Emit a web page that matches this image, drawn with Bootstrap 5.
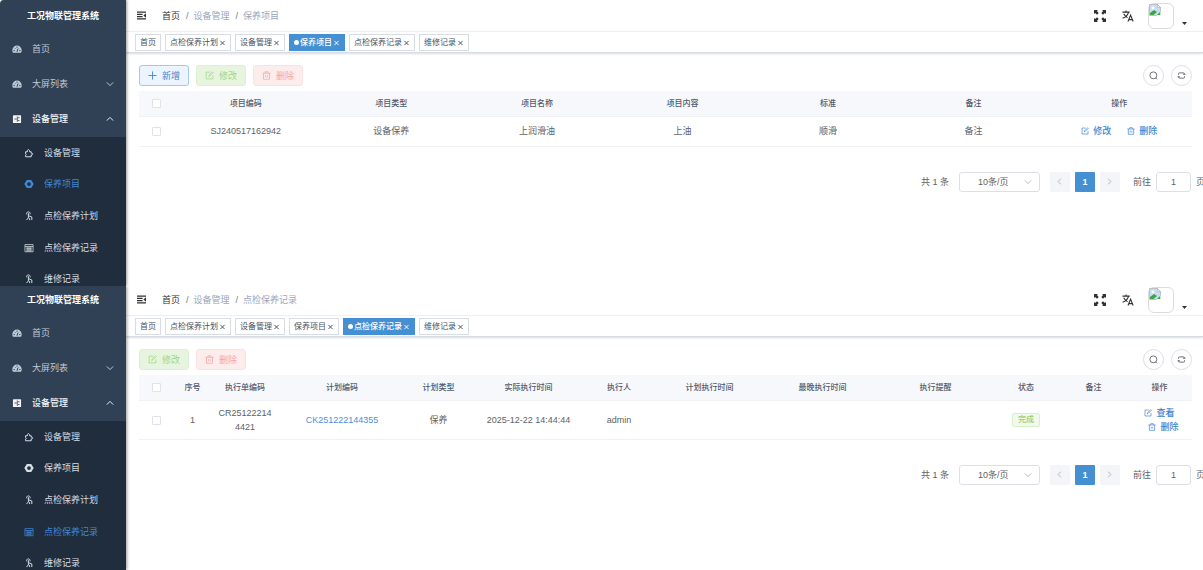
<!DOCTYPE html>
<html lang="zh-CN">
<head>
<meta charset="utf-8">
<meta name="viewport" content="width=device-width, initial-scale=1">
<title>工况物联管理系统</title>
<link href="https://cdn.jsdelivr.net/npm/bootstrap@5.3.0/dist/css/bootstrap.min.css" rel="stylesheet">
<style>
:root{--side:#304156;--sub:#1f2d3d;--blue:#4490d3}
body{font-family:"Liberation Sans","Noto Sans CJK SC",sans-serif;font-size:9px;line-height:14px;color:#606266;background:#fff}
button,input,select{font:inherit}
svg{display:block;flex:none}
.ico{width:9px;height:9px;fill:none;stroke:currentColor;stroke-width:1.2}
.ico-bar{width:12px;height:12px}
.pages{display:grid;grid-template-rows:286fr 284fr;height:100vh;min-height:570px}
.screen{--head:32px;overflow:hidden;min-height:0}
.screen-short{--head:30px}
/* sidebar */
.side{width:126px;background:var(--side);box-shadow:1px 0 3px rgba(0,0,0,.4);z-index:2;flex:none;overflow:hidden}
.screen:first-child .side{border-top-left-radius:4px}
.side-title{height:var(--head);color:#fff;font-weight:700;font-size:9px;line-height:calc(var(--head) - 2px);padding-top:1px}
.screen-short .side-title{padding-top:0}
.side a{color:#bfcbd9;text-decoration:none;display:flex;align-items:center}
.side-top{height:35px;padding:0 12px 1px;gap:10px}
.side-top .ico{width:10px;height:10px}
.side-top .fold{width:8px;height:8px;margin-left:auto}
.side a.opened{color:#f4f4f5;font-weight:500}
.side-sub{display:grid;grid-auto-rows:1fr;height:158px;background:var(--sub)}
.side-sub a{padding-left:24px;gap:10px;color:#d5dde6}
.side-sub .ico{width:10px;height:10px}
.side-sub a.on{color:#4187d6}
/* header */
.topbar{height:var(--head);border-bottom:1px solid #f0f1f3;padding:0 16px 0 11px}
.screen-short .topbar{padding-bottom:2px}
.breadcrumb{--bs-breadcrumb-item-padding-x:5px;--bs-breadcrumb-divider-color:#70757d;--bs-breadcrumb-font-size:9px;margin:0 0 0 16px}
.breadcrumb-item{color:#97a8be}
.breadcrumb-item + .breadcrumb-item{padding-left:6px}
.breadcrumb a{color:#303133;text-decoration:none}
.plain{border:0;background:none;padding:0;color:#303133}
.avatar{width:26px;height:26px;border:1px solid #dcdcdc;border-radius:6px;padding:0;margin-left:14px}
.tagbar{height:21px;padding:2px 0 0 9px;gap:4px;border-bottom:1px solid #d8dce5;box-shadow:0 1px 2px rgba(0,0,0,.14)}
.tag{height:17px;border:1px solid #d8dce5;font-size:8px;line-height:15px;padding:0 4px;color:#495060;text-decoration:none;display:flex;align-items:center;gap:1px;white-space:nowrap}
.tag .ico{width:7px;height:7px;padding-top:1px}
.tag.on{background:var(--blue);border-color:var(--blue);color:#fff;font-weight:500}
.tag.on::before{content:"";width:5px;height:5px;border-radius:50%;background:#fff}
/* content */
.work{padding:12px 11px 0 13px}
.tools{gap:7px}
.tool{width:50px;height:21px;border-radius:3px;padding:0;display:flex;align-items:center;justify-content:center;gap:5px;--bs-btn-font-size:9px;--bs-btn-line-height:14px}
.tool-add{color:#3f86cf;background:#ecf5ff;border-color:#a3c9ef}
.tool-edit,.tool-edit:disabled{color:#a3d488;background:#e7f5df;border-color:#def0d4;opacity:1}
.tool-del,.tool-del:disabled{color:#f5a5a5;background:#fdecec;border-color:#fbe2e2;opacity:1}
.round{width:21px;height:21px;border:1px solid #dcdfe6;border-radius:50%;background:#fff;color:#606266;padding:0;display:grid;place-items:center}
.grid-table{table-layout:fixed;width:100%;margin:5px 0 0;text-align:center}
.grid-table th{background:#f7f8fb;height:25px;font-size:8px;font-weight:500;color:#515a6e;padding:1px 0 0;border-bottom:1px solid #eff1f5}
.grid-table td{height:30px;padding:5px 6px;border-bottom:1px solid #eff1f5;word-break:break-all}
.grid-table th,.grid-table td{vertical-align:middle}
.grid-table .form-check-input{width:9px;height:9px;margin:0;border:1px solid #dfe2e8;border-radius:1px;display:inline-block;vertical-align:middle}
.grid-table .acts{padding-left:0;padding-right:0}
.act{border:0;background:none;color:#3a84d0;padding:0 4px;display:inline-flex;align-items:center;gap:4px;font-weight:500;height:14px;vertical-align:top}
.act + .act{margin-left:8px}
.act .ico{width:8px;height:8px}
.plan-link{color:#4a8fdc}
.done{display:inline-block;font-size:8px;line-height:12px;height:14px;padding:0 5px;color:#7cc35a;background:#f0f9eb;border:1px solid #d9efcc;border-radius:2px;vertical-align:middle}
.pager{margin:25px -13px 0 0}
.pager label{margin-left:13px}
.pager .form-select{width:81px;height:20px;padding:0 20px 0 18px;font-size:9px;line-height:18px;border:1px solid #dcdfe6;border-radius:3px;color:#606266;margin:0 10px;background-image:url("data:image/svg+xml,%3Csvg xmlns='http://www.w3.org/2000/svg' viewBox='0 0 10 10'%3E%3Cpath d='M1 3l4 4 4-4' fill='none' stroke='%23a4a8b0'/%3E%3C/svg%3E");background-size:8px;background-position:right 7px center}
.pages-nav{gap:5px}
.pg{width:20px;height:20px;border:0;border-radius:1px;background:#f4f5f8;color:#a8abb2;padding:0;display:grid;place-items:center}
.pg .ico{width:7px;height:7px}
.pg.on{background:var(--blue);color:#fff;font-weight:700}
.pager .form-control{width:35px;height:20px;padding:0;border:1px solid #dcdfe6;border-radius:3px;font-size:9px;text-align:center;color:#606266;margin:0 5px}
</style>
</head>
<body>
<svg width="0" height="0" class="position-absolute" aria-hidden="true">
<symbol id="dash" viewBox="0 0 16 16"><path d="M1.500 14A7.500 7.500 0 0 1 .5 10a7.500 7.500 0 0 1 15 0 7.500 7.500 0 0 1-1 4z" fill="currentColor" stroke="none"/><path d="M8 12.500l1.500-5M2.500 10.500h2M11.500 10.500h2M4.300 6.300l1 1M8 4v2M11.700 6.300l-.6.6" stroke="#304156" stroke-width="1.600"/></symbol>
<symbol id="device" viewBox="0 0 16 16"><rect x="1.500" y="2" width="13" height="12.500" rx="1" fill="currentColor" stroke="none"/><path d="M4 8h3.500M9.500 6h2.500M9.500 10.500h2.500M8.500 4v8.500" stroke="#304156" stroke-width="1.300"/></symbol>
<symbol id="puzzle" viewBox="0 0 16 16"><path d="M2.500 6h3c-1-4.500 4-4.500 3.500 0h2.500v2.300c3.500-.5 3.500 3.200 0 2.700V14h-9v-2.500c1.500-.5 1.500-2 0-2.500z" stroke-width="1.600"/></symbol>
<symbol id="hexnut" viewBox="0 0 16 16"><path d="M4.500 1.500h7L15.500 8l-4 6.500h-7L.5 8zM8 5a3 3 0 1 0 0 6 3 3 0 0 0 0-6z" fill="currentColor" fill-rule="evenodd" stroke="none"/></symbol>
<symbol id="touch" viewBox="0 0 16 16"><path d="M4.500 5.500a2.800 2.800 0 1 1 5 0M7 3.500v7.500L4 14.500M7 7.500l5.500 2v5M7 10.500l2 1.500v2.500" stroke-width="1.600"/></symbol>
<symbol id="sheet" viewBox="0 0 16 16"><path d="M1.500 2.500h13v11.500h-13zM1.500 5.500h13M5 5.500V14M8 5.500V14M11 5.500V14M4 8.500h8M4 11.300h8" stroke-width="1.200"/></symbol>
<symbol id="down" viewBox="0 0 10 10"><path d="M1 3l4 4 4-4"/></symbol>
<symbol id="up" viewBox="0 0 10 10"><path d="M1 7l4-4 4 4"/></symbol>
<symbol id="left" viewBox="0 0 10 10"><path d="M7 1L3 5l4 4"/></symbol>
<symbol id="right" viewBox="0 0 10 10"><path d="M3 1l4 4-4 4"/></symbol>
<symbol id="cross" viewBox="0 0 10 10"><path d="M1.500 1.500l7 7M8.500 1.500l-7 7" stroke-width="1.600"/></symbol>
<symbol id="plus" viewBox="0 0 10 10"><path d="M5 .5v9M.5 5h9" stroke-width="1"/></symbol>
<symbol id="edit" viewBox="0 0 12 12"><path d="M7 1.500H1.500v9h9V6M5 7.500l.5-2L10 1l1 1-4.500 4.500z" stroke-width="1"/></symbol>
<symbol id="trash" viewBox="0 0 12 12"><path d="M.5 3h11M4 3V1h4v2M2 3v8h8V3M4.800 5.500v3M7.200 5.500v3" stroke-width="1"/></symbol>
<symbol id="search" viewBox="0 0 12 12"><circle cx="5.800" cy="5.800" r="4.600"/><path d="M8.800 9.200l2 2"/></symbol>
<symbol id="refresh" viewBox="0 0 12 12"><path d="M2 5V3.500Q2 2.500 3 2.500h5.500Q10 2.500 10 4.500M8 4.300h3.300M10 7v1.500Q10 9.500 9 9.500H3.500Q2 9.500 2 7.500M4 7.700H.7"/></symbol>
<symbol id="fold" viewBox="0 0 12 12"><path d="M0 1.500h12M0 4.500h7.500M0 7.500h7.500M0 10.500h12" stroke-width="1.500"/><path d="M12 3v6L8.500 6z" fill="currentColor" stroke="none"/></symbol>
<symbol id="full" viewBox="0 0 12 12"><path d="M0 0h4L2.900 1.100 4.700 3 3 4.700 1.100 2.900 0 4zM12 0v4l-1.100-1.100L9 4.700 7.300 3l1.800-1.900L8 0zM0 12V8l1.100 1.100L3 7.300 4.700 9l-1.800 1.900L4 12zM12 12H8l1.100-1.100L7.300 9 9 7.300l1.900 1.800L12 8z" fill="currentColor" stroke="none"/></symbol>
<symbol id="lang" viewBox="0 0 14 14"><path d="M.5 2.500h8.500M4.700.5v2M2 4.500c1 2 2.500 3.500 4.500 4.500M7.500 3C6.500 6 4 8.500.8 9.500M7 13.500L10 6l3 7.500M8 11.200h4" stroke-width="1.300"/></symbol>
<symbol id="broken" viewBox="0 0 12 12"><path d="M.5.5h8l3 3v4l-4 4h-7z" fill="#c9dcf5" stroke="#b5b5b5" stroke-width=".8"/><path d="M8.500.5v3h3z" fill="#fff" stroke="#aaa" stroke-width=".6"/><circle cx="4" cy="4" r="1.400" fill="#fff" stroke="none"/><path d="M1 11V9l4-3 3 2-3.500 3zM8 11l3.300-3V11z" fill="#38a838" stroke="none"/></symbol>
</svg>

<div class="pages">
<section class="screen d-flex">
  <nav class="side" aria-label="主菜单">
    <div class="side-title text-center">工况物联管理系统</div>
    <a class="side-top" href="#"><svg class="ico"><use href="#dash"/></svg>首页</a>
    <a class="side-top" href="#"><svg class="ico"><use href="#dash"/></svg>大屏列表<svg class="ico fold"><use href="#down"/></svg></a>
    <a class="side-top opened" href="#"><svg class="ico"><use href="#device"/></svg>设备管理<svg class="ico fold"><use href="#up"/></svg></a>
    <div class="side-sub">
      <a href="#"><svg class="ico"><use href="#puzzle"/></svg>设备管理</a>
      <a href="#" class="on"><svg class="ico"><use href="#hexnut"/></svg>保养项目</a>
      <a href="#"><svg class="ico"><use href="#touch"/></svg>点检保养计划</a>
      <a href="#"><svg class="ico"><use href="#sheet"/></svg>点检保养记录</a>
      <a href="#"><svg class="ico"><use href="#touch"/></svg>维修记录</a>
    </div>
  </nav>
  <main class="flex-grow-1 overflow-hidden">
    <header class="topbar d-flex align-items-center">
      <button class="plain" aria-label="折叠菜单"><svg class="ico" width="11"><use href="#fold"/></svg></button>
      <ol class="breadcrumb me-auto"><li class="breadcrumb-item"><a href="#">首页</a></li><li class="breadcrumb-item">设备管理</li><li class="breadcrumb-item">保养项目</li></ol>
      <button class="plain" aria-label="全屏"><svg class="ico ico-bar"><use href="#full"/></svg></button>
      <button class="plain ms-3" aria-label="语言"><svg class="ico ico-bar"><use href="#lang"/></svg></button>
      <button class="plain d-flex align-items-end" aria-label="用户"><span class="avatar"><svg width="12" height="12"><use href="#broken"/></svg></span><svg class="ms-2 mb-1" width="5" height="3"><path d="M0 0h5L2.500 3z" fill="#303133"/></svg></button>
    </header>
    <div class="tagbar d-flex">
      <a class="tag" href="#">首页</a>
      <a class="tag" href="#">点检保养计划<svg class="ico"><use href="#cross"/></svg></a>
      <a class="tag" href="#">设备管理<svg class="ico"><use href="#cross"/></svg></a>
      <a class="tag on" href="#">保养项目<svg class="ico"><use href="#cross"/></svg></a>
      <a class="tag" href="#">点检保养记录<svg class="ico"><use href="#cross"/></svg></a>
      <a class="tag" href="#">维修记录<svg class="ico"><use href="#cross"/></svg></a>
    </div>
    <div class="work">
      <div class="d-flex">
        <div class="d-flex me-auto tools">
          <button class="btn tool tool-add"><svg class="ico"><use href="#plus"/></svg>新增</button>
          <button class="btn tool tool-edit" disabled><svg class="ico"><use href="#edit"/></svg>修改</button>
          <button class="btn tool tool-del" disabled><svg class="ico"><use href="#trash"/></svg>删除</button>
        </div>
        <div class="d-flex tools">
          <button class="round" aria-label="搜索"><svg class="ico"><use href="#search"/></svg></button>
          <button class="round" aria-label="刷新"><svg class="ico"><use href="#refresh"/></svg></button>
        </div>
      </div>
      <table class="grid-table">
        <colgroup><col style="width:34px"><col span="7"></colgroup>
        <thead><tr><th><input class="form-check-input" type="checkbox" aria-label="全选"></th><th>项目编码</th><th>项目类型</th><th>项目名称</th><th>项目内容</th><th>标准</th><th>备注</th><th>操作</th></tr></thead>
        <tbody><tr><td><input class="form-check-input" type="checkbox" aria-label="选择"></td><td>SJ240517162942</td><td>设备保养</td><td>上润滑油</td><td>上油</td><td>顺滑</td><td>备注</td><td class="acts"><button class="act"><svg class="ico"><use href="#edit"/></svg>修改</button><button class="act"><svg class="ico"><use href="#trash"/></svg>删除</button></td></tr></tbody>
      </table>
      <div class="pager d-flex align-items-center justify-content-end">
        <span>共 1 条</span>
        <select class="form-select" aria-label="每页条数"><option>10条/页</option></select>
        <div class="d-flex pages-nav">
          <button class="pg" aria-label="上一页"><svg class="ico"><use href="#left"/></svg></button>
          <button class="pg on">1</button>
          <button class="pg" aria-label="下一页"><svg class="ico"><use href="#right"/></svg></button>
        </div>
        <label for="jump1">前往</label>
        <input class="form-control" id="jump1" value="1"><span>页</span>
      </div>
    </div>
  </main>
</section>

<section class="screen screen-short d-flex">
  <nav class="side" aria-label="主菜单">
    <div class="side-title text-center">工况物联管理系统</div>
    <a class="side-top" href="#"><svg class="ico"><use href="#dash"/></svg>首页</a>
    <a class="side-top" href="#"><svg class="ico"><use href="#dash"/></svg>大屏列表<svg class="ico fold"><use href="#down"/></svg></a>
    <a class="side-top opened" href="#"><svg class="ico"><use href="#device"/></svg>设备管理<svg class="ico fold"><use href="#up"/></svg></a>
    <div class="side-sub">
      <a href="#"><svg class="ico"><use href="#puzzle"/></svg>设备管理</a>
      <a href="#"><svg class="ico"><use href="#hexnut"/></svg>保养项目</a>
      <a href="#"><svg class="ico"><use href="#touch"/></svg>点检保养计划</a>
      <a href="#" class="on"><svg class="ico"><use href="#sheet"/></svg>点检保养记录</a>
      <a href="#"><svg class="ico"><use href="#touch"/></svg>维修记录</a>
    </div>
  </nav>
  <main class="flex-grow-1 overflow-hidden">
    <header class="topbar d-flex align-items-center">
      <button class="plain" aria-label="折叠菜单"><svg class="ico"><use href="#fold"/></svg></button>
      <ol class="breadcrumb me-auto"><li class="breadcrumb-item"><a href="#">首页</a></li><li class="breadcrumb-item">设备管理</li><li class="breadcrumb-item">点检保养记录</li></ol>
      <button class="plain" aria-label="全屏"><svg class="ico ico-bar"><use href="#full"/></svg></button>
      <button class="plain ms-3" aria-label="语言"><svg class="ico ico-bar"><use href="#lang"/></svg></button>
      <button class="plain d-flex align-items-end" aria-label="用户"><span class="avatar"><svg width="12" height="12"><use href="#broken"/></svg></span><svg class="ms-2 mb-1" width="5" height="3"><path d="M0 0h5L2.500 3z" fill="#303133"/></svg></button>
    </header>
    <div class="tagbar d-flex">
      <a class="tag" href="#">首页</a>
      <a class="tag" href="#">点检保养计划<svg class="ico"><use href="#cross"/></svg></a>
      <a class="tag" href="#">设备管理<svg class="ico"><use href="#cross"/></svg></a>
      <a class="tag" href="#">保养项目<svg class="ico"><use href="#cross"/></svg></a>
      <a class="tag on" href="#">点检保养记录<svg class="ico"><use href="#cross"/></svg></a>
      <a class="tag" href="#">维修记录<svg class="ico"><use href="#cross"/></svg></a>
    </div>
    <div class="work">
      <div class="d-flex">
        <div class="d-flex me-auto tools">
          <button class="btn tool tool-edit" disabled><svg class="ico"><use href="#edit"/></svg>修改</button>
          <button class="btn tool tool-del" disabled><svg class="ico"><use href="#trash"/></svg>删除</button>
        </div>
        <div class="d-flex tools">
          <button class="round" aria-label="搜索"><svg class="ico"><use href="#search"/></svg></button>
          <button class="round" aria-label="刷新"><svg class="ico"><use href="#refresh"/></svg></button>
        </div>
      </div>
      <table class="grid-table">
        <colgroup><col style="width:35px"><col style="width:37px"><col style="width:68px"><col style="width:126px"><col style="width:67px"><col style="width:113px"><col style="width:68px"><col style="width:113px"><col style="width:113px"><col style="width:113px"><col style="width:68px"><col style="width:67px"><col style="width:65px"></colgroup>
        <thead><tr><th><input class="form-check-input" type="checkbox" aria-label="全选"></th><th>序号</th><th>执行单编码</th><th>计划编码</th><th>计划类型</th><th>实际执行时间</th><th>执行人</th><th>计划执行时间</th><th>最晚执行时间</th><th>执行提醒</th><th>状态</th><th>备注</th><th>操作</th></tr></thead>
        <tbody><tr><td><input class="form-check-input" type="checkbox" aria-label="选择"></td><td>1</td><td>CR251222144421</td><td><a class="text-decoration-none plan-link" href="#">CK251222144355</a></td><td>保养</td><td>2025-12-22 14:44:44</td><td>admin</td><td></td><td></td><td></td><td><span class="done">完成</span></td><td></td><td class="acts"><button class="act"><svg class="ico"><use href="#edit"/></svg>查看</button><button class="act"><svg class="ico"><use href="#trash"/></svg>删除</button></td></tr></tbody>
      </table>
      <div class="pager d-flex align-items-center justify-content-end">
        <span>共 1 条</span>
        <select class="form-select" aria-label="每页条数"><option>10条/页</option></select>
        <div class="d-flex pages-nav">
          <button class="pg" aria-label="上一页"><svg class="ico"><use href="#left"/></svg></button>
          <button class="pg on">1</button>
          <button class="pg" aria-label="下一页"><svg class="ico"><use href="#right"/></svg></button>
        </div>
        <label for="jump2">前往</label>
        <input class="form-control" id="jump2" value="1"><span>页</span>
      </div>
    </div>
  </main>
</section>
</div>
<script src="https://cdn.jsdelivr.net/npm/bootstrap@5.3.0/dist/js/bootstrap.bundle.min.js"></script>
</body>
</html>
